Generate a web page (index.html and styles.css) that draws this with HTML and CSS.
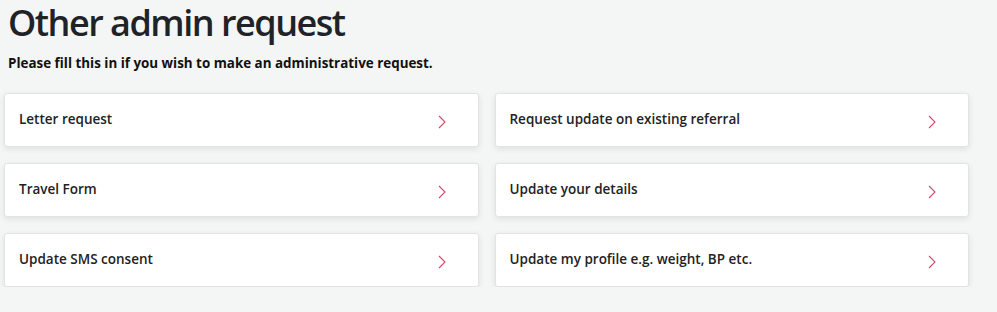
FILE: index.html
```html
<!DOCTYPE html>
<html lang="en">
<head>
<meta charset="utf-8">
<title>Other admin request</title>
<link rel="stylesheet" href="styles.css">
</head>
<body>
<main class="page">
  <h1 class="title">Other admin request</h1>
  <p class="intro">Please fill this in if you wish to make an administrative request.</p>
  <div class="grid">
    <a class="card" href="#"><span class="label">Letter request</span><svg class="chev" viewBox="0 0 8 14" width="8" height="14"><path d="M1 1l6 6-6 6" fill="none" stroke="#d6496b" stroke-width="1.1"/></svg></a>
    <a class="card" href="#"><span class="label">Request update on existing referral</span><svg class="chev" viewBox="0 0 8 14" width="8" height="14"><path d="M1 1l6 6-6 6" fill="none" stroke="#d6496b" stroke-width="1.1"/></svg></a>
    <a class="card" href="#"><span class="label">Travel Form</span><svg class="chev" viewBox="0 0 8 14" width="8" height="14"><path d="M1 1l6 6-6 6" fill="none" stroke="#d6496b" stroke-width="1.1"/></svg></a>
    <a class="card" href="#"><span class="label">Update your details</span><svg class="chev" viewBox="0 0 8 14" width="8" height="14"><path d="M1 1l6 6-6 6" fill="none" stroke="#d6496b" stroke-width="1.1"/></svg></a>
    <a class="card" href="#"><span class="label">Update SMS consent</span><svg class="chev" viewBox="0 0 8 14" width="8" height="14"><path d="M1 1l6 6-6 6" fill="none" stroke="#d6496b" stroke-width="1.1"/></svg></a>
    <a class="card" href="#"><span class="label">Update my profile e.g. weight, BP etc.</span><svg class="chev" viewBox="0 0 8 14" width="8" height="14"><path d="M1 1l6 6-6 6" fill="none" stroke="#d6496b" stroke-width="1.1"/></svg></a>
  </div>
</main>
</body>
</html>
```
FILE: styles.css
```css
html, body {
  margin: 0;
  padding: 0;
  background: #f4f5f5;
}
body {
  font-family: "Open Sans", "Noto Sans", sans-serif;
  color: #212529;
}
.page {
  padding: 0 28px 0 4px;
}
.title {
  margin: 0;
  padding: 0 0 0 4px;
  font-size: 36px;
  font-weight: 600;
  line-height: 46px;
  letter-spacing: -1.5px;
  color: #1f2328;
}
.intro {
  margin: 8px 0 0 4px;
  font-size: 13.4px;
  font-weight: 700;
  line-height: 18px;
  color: #111;
}
.grid {
  margin-top: 21px;
  display: grid;
  grid-template-columns: 1fr 1fr;
  column-gap: 16px;
  row-gap: 16px;
}
.card {
  display: flex;
  justify-content: space-between;
  align-items: flex-start;
  height: 54px;
  box-sizing: border-box;
  padding: 16px 32px 0 14px;
  background: #fff;
  border: 1px solid #e3e3e3;
  border-radius: 3px;
  box-shadow: 0 2px 6px rgba(0, 0, 0, 0.09);
  text-decoration: none;
  color: #222;
}
.label {
  font-size: 13.5px;
  font-weight: 600;
  line-height: 18px;
}
.chev {
  margin-top: 5px;
}
```
